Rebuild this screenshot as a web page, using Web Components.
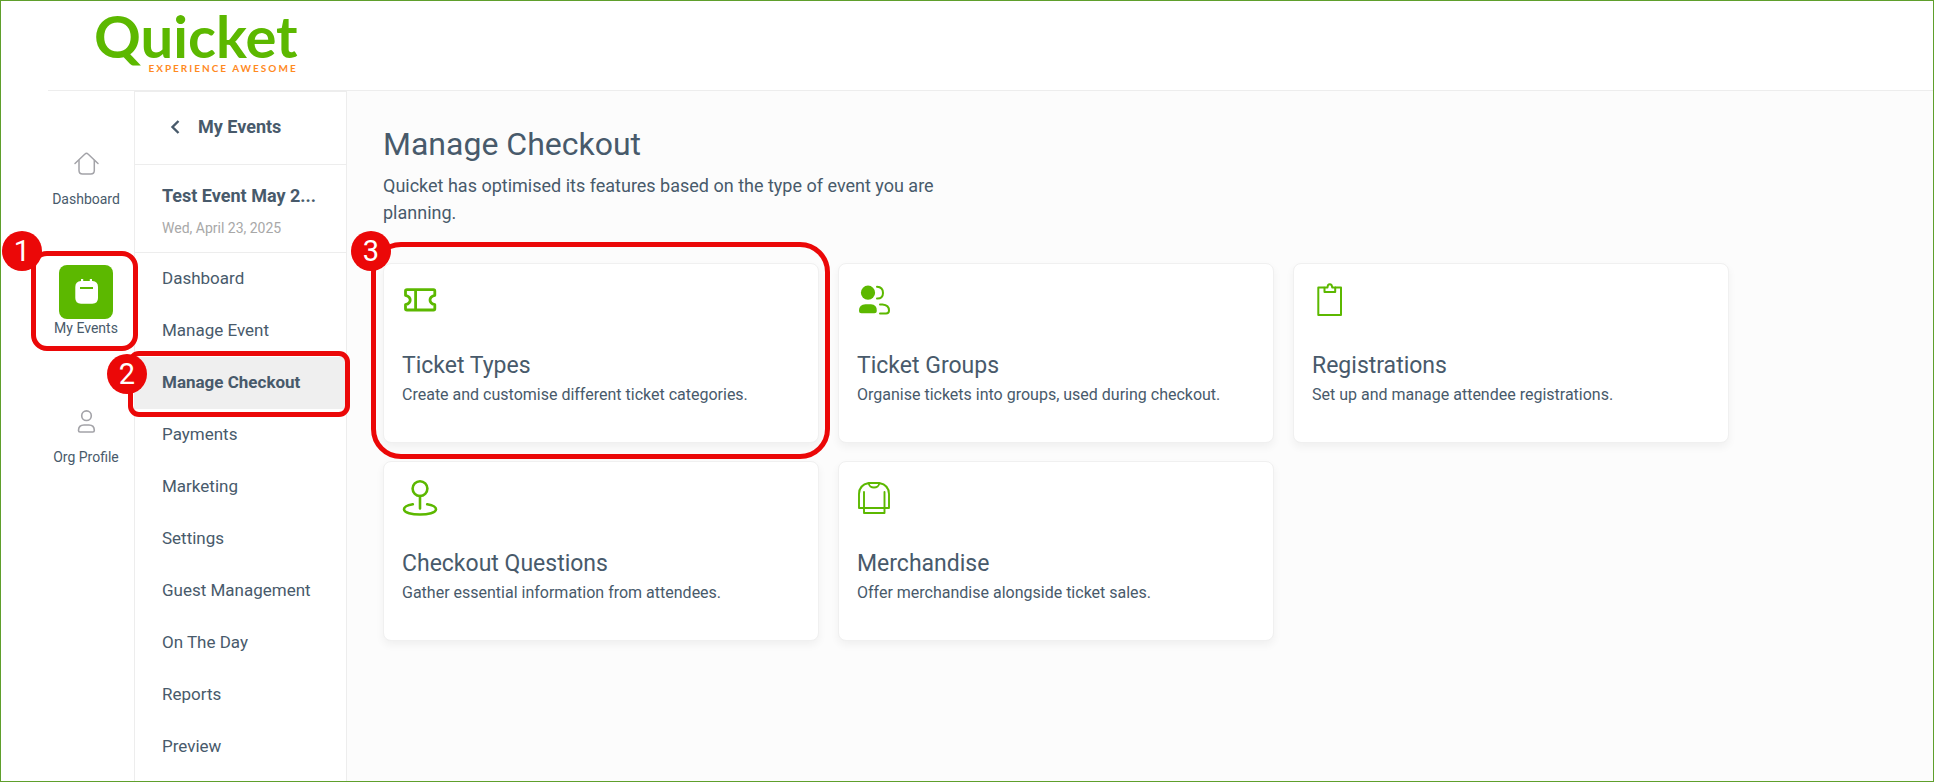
<!DOCTYPE html>
<html lang="en">
<head>
<meta charset="utf-8">
<title>Quicket - Manage Checkout</title>
<style>
  html, body { margin: 0; }
  body {
    --ink: #485a6b;
    --green: #5cb800;
    --line: #ededed;
    --mark: #eb0808;
    font-family: Roboto, "Liberation Sans", sans-serif;
    color: var(--ink);
    background: #fff;
  }
</style>
</head>
<body>
<app-shell>
  <brand-logo slot="header"></brand-logo>
  <side-rail slot="rail">
    <rail-item icon="home">Dashboard</rail-item>
    <rail-item icon="calendar" active>My Events<step-mark slot="mark" step="1"></step-mark></rail-item>
    <rail-item icon="person">Org Profile</rail-item>
  </side-rail>
  <event-menu slot="menu" heading="My Events" event="Test Event May 2..." date="Wed, April 23, 2025">
    <menu-item>Dashboard</menu-item>
    <menu-item>Manage Event</menu-item>
    <menu-item active>Manage Checkout<step-mark slot="mark" step="2"></step-mark></menu-item>
    <menu-item>Payments</menu-item>
    <menu-item>Marketing</menu-item>
    <menu-item>Settings</menu-item>
    <menu-item>Guest Management</menu-item>
    <menu-item>On The Day</menu-item>
    <menu-item>Reports</menu-item>
    <menu-item>Preview</menu-item>
  </event-menu>
  <checkout-page>
    <span slot="title">Manage Checkout</span>
    <span slot="intro">Quicket has optimised its features based on the type of event you are planning.</span>
    <feature-card icon="ticket" heading="Ticket Types">Create and customise different ticket categories.<step-mark slot="mark" step="3"></step-mark></feature-card>
    <feature-card icon="group" heading="Ticket Groups">Organise tickets into groups, used during checkout.</feature-card>
    <feature-card icon="clipboard" heading="Registrations">Set up and manage attendee registrations.</feature-card>
    <feature-card icon="pin" heading="Checkout Questions">Gather essential information from attendees.</feature-card>
    <feature-card icon="jumper" heading="Merchandise">Offer merchandise alongside ticket sales.</feature-card>
  </checkout-page>
</app-shell>

<script>
const railIcons = {
  home: `<g fill="none" stroke="#a3a3a8" stroke-width="1.5" stroke-linecap="round" stroke-linejoin="round">
    <path d="M16 27.5 26 18Q27.5 16.4 29 18L39 27.5"/>
    <path d="M20 24.5V34.5Q20 38 23.5 38H31.8Q35.3 38 35.3 34.5V24.5"/></g>`,
  calendar: `<path fill="#fff" d="M22 14h2.2v2h6.600V14H33v2h.5Q39 16.500 39 22v11q0 5.700-5.700 5.700H22q-5.700 0-5.700-5.700V22Q16.300 16.500 22 16z"/>
    <path d="M21 23H34" stroke="#5cb800" stroke-width="2"/>`,
  person: `<g fill="none" stroke="#a3a3a8" stroke-width="1.600">
    <circle cx="27.500" cy="21.700" r="4.800"/>
    <path d="M25 31h5Q35.300 31 35.300 36.500 35.300 38 33.800 38H21Q19.500 38 19.500 36.500 19.500 31 25 31z"/></g>`
};
const cardIcons = {
  ticket: `<path fill="none" stroke="#5cb800" stroke-width="2.800" stroke-linejoin="round" d="M5 7.600H31.500Q32.800 7.600 32.800 9V13.300Q28 14.500 28 18T32.800 22.700V26.800Q32.800 28 31.500 28H5Q3.500 28 3.500 26.800V22.700Q8.200 21.500 8.200 18T3.500 13.300V9Q3.500 7.600 5 7.600zM13.600 7.600V28"/>`,
  group: `<g fill="#5cb800"><circle cx="11" cy="10.700" r="7.100"/><path d="M8.500 22.300h5.500q5.800 0 5.800 6.500 0 2.500-2.500 2.500H4.500Q2 31.300 2 28.800q0-6.500 6.500-6.500z"/></g>
    <g fill="none" stroke="#5cb800" stroke-width="2" stroke-linecap="round"><path d="M20 4.800Q26 5.200 26 11T20 16.500M23 22.500h2.500Q32 23 32 28.500 32 31.500 29 31.500H23"/></g>`,
  clipboard: `<g fill="none" stroke="#5cb800" stroke-width="2" stroke-linejoin="round"><path d="M12.500 5.500H6.300V33H29V5.500H23"/>
    <path d="M12.500 5.500V10H23.200V5.500H20.200Q20 2.200 17.800 2.200T15.500 5.500z"/></g>`,
  pin: `<g fill="none" stroke="#5cb800" stroke-width="2.600" stroke-linecap="round"><circle cx="18" cy="8.600" r="7.400"/>
    <path d="M18 16V28.500M10.800 24.300Q2 25.800 2 29.300C2 36.300 34 36.300 34 29.300Q34 25.800 25.200 24.300"/></g>`,
  jumper: `<g fill="none" stroke="#5cb800" stroke-width="1.900" stroke-linecap="round" stroke-linejoin="round">
    <path d="M11.700 3H22.300Q32 5 32 14V28H2V14Q2 5 11.700 3C12 9 22 9 22.300 3"/><path d="M7 12V33H27.500V12"/></g>`
};
const svg = (size, body) => `<svg width="${size}" height="${size}" viewBox="0 0 ${size} ${size}" aria-hidden="true">${body}</svg>`;

class View extends HTMLElement {
  connectedCallback() {
    if (this.shadowRoot) return;
    this.attachShadow({ mode: 'open' }).innerHTML = this.view();
  }
}

customElements.define('app-shell', class extends View {
  view() { return `<style>
    :host { display: flex; flex-direction: column; box-sizing: border-box; min-height: 100vh; border: 1px solid #5f9f2c; }
    header { box-sizing: border-box; height: 90px; margin-left: 47px; padding: 7px 46px 0; border-bottom: 1px solid var(--line); }
    .body { flex: 1; display: flex; }
    main { flex: 1; min-width: 0; background: #fcfcfc; }
  </style>
  <header><slot name="header"></slot></header>
  <div class="body"><slot name="rail"></slot><slot name="menu"></slot><main><slot></slot></main></div>`; }
});

customElements.define('brand-logo', class extends View {
  view() { return `<style>
    :host { display: block; }
    a { display: inline-flex; flex-direction: column; color: var(--green); text-decoration: none; font-family: Lato, sans-serif; font-weight: 700; }
    .name { font-size: 58px; line-height: 56px; }
    .tag { align-self: flex-end; font-size: 10px; line-height: 8px; letter-spacing: 2px; color: #ff8a1f; }
  </style><a href="#home"><span class="name">Quicket</span><span class="tag">EXPERIENCE AWESOME</span></a>`; }
});

customElements.define('side-rail', class extends View {
  view() { return `<style>
    :host { display: block; box-sizing: border-box; width: 133px; padding: 45px 0 0 37px; }
    nav { display: flex; flex-direction: column; gap: 57px; }
  </style><nav aria-label="Sections"><slot></slot></nav>`; }
});

customElements.define('rail-item', class extends View {
  view() { return `<style>
    :host { display: block; position: relative; --mark-inset: -14px -4px -14px -7px; --mark-radius: 16px; --badge-x: -34px; --badge-y: -25px; }
    a { display: flex; flex-direction: column; align-items: center; color: inherit; text-decoration: none; font-size: 14px; line-height: 18px; }
    .icon { width: 54px; height: 54px; border-radius: 8px; }
    :host([active]) .icon { background: var(--green); }
    svg { display: block; }
  </style><a href="#section"><span class="icon">${svg(54, railIcons[this.getAttribute('icon')])}</span><span><slot></slot></span></a><slot name="mark"></slot>`; }
});

customElements.define('event-menu', class extends View {
  view() { return `<style>
    :host { display: block; box-sizing: border-box; width: 213px; border: 1px solid var(--line); border-bottom: 0; }
    .back { display: flex; align-items: center; gap: 11px; box-sizing: border-box; width: 100%; height: 73px; padding: 0 28px 2px; border: 0; border-bottom: 1px solid var(--line); background: none; font: 700 18px/24px Roboto, sans-serif; color: inherit; }
    .event { padding: 19px 27px 14px; border-bottom: 1px solid var(--line); }
    h2 { margin: 0 0 10px; font-size: 18px; line-height: 24px; font-weight: 700; white-space: nowrap; }
    p { margin: 0; font-size: 14px; line-height: 20px; color: #a8a8a8; }
    nav { display: flex; flex-direction: column; }
  </style>
  <button class="back" type="button">${svg(24, '<path fill="none" stroke="#485a6b" stroke-width="2.400" d="M15.500 6 9.500 12 15.500 18"/>')}<span>${this.getAttribute('heading')}</span></button>
  <div class="event"><h2>${this.getAttribute('event')}</h2><p>${this.getAttribute('date')}</p></div>
  <nav aria-label="Event menu"><slot></slot></nav>`; }
});

customElements.define('menu-item', class extends View {
  view() { return `<style>
    :host { display: block; position: relative; --mark-inset: -6px -4px -8px -7px; --mark-radius: 11px; --badge-x: -26px; --badge-y: -2px; }
    a { display: block; padding: 13px 27px 15px; font-size: 17px; line-height: 24px; color: inherit; text-decoration: none; white-space: nowrap; }
    :host([active]) a { background: #efefef; font-weight: 700; }
  </style><a href="#page"><slot></slot></a><slot name="mark"></slot>`; }
});

customElements.define('checkout-page', class extends View {
  view() { return `<style>
    :host { display: block; padding: 33px 36px; }
    h1 { margin: 0 0 8px; font-size: 32px; line-height: 40px; font-weight: 400; }
    p { margin: 0 0 37px; max-width: 560px; font-size: 18px; line-height: 27px; }
    .cards { display: grid; grid-template-columns: repeat(3, minmax(0, 1fr)); gap: 18px 19px; max-width: 1346px; }
  </style>
  <h1><slot name="title"></slot></h1><p><slot name="intro"></slot></p>
  <div class="cards"><slot></slot></div>`; }
});

customElements.define('feature-card', class extends View {
  view() { return `<style>
    :host { display: block; position: relative; --mark-inset: -21px -11px -16px -12px; --mark-radius: 30px; --badge-x: -25px; --badge-y: -16px; }
    a { display: block; padding: 18px 18px 35px; border: 1px solid #f0f0f0; border-radius: 8px; background: #fff; box-shadow: 0 4px 8px rgba(0, 0, 0, .05); color: inherit; text-decoration: none; }
    svg { display: block; overflow: visible; }
    h2 { margin: 34px 0 3px; font-size: 23px; line-height: 28px; font-weight: 400; }
    p { margin: 0; font-size: 16px; line-height: 24px; }
  </style>
  <a href="#feature">${svg(36, cardIcons[this.getAttribute('icon')])}<h2>${this.getAttribute('heading')}</h2><p><slot></slot></p></a><slot name="mark"></slot>`; }
});

/* Numbered outline laid over its host item; the item supplies inset and badge place. */
customElements.define('step-mark', class extends View {
  view() { return `<style>
    :host { position: absolute; inset: var(--mark-inset); z-index: 2; box-sizing: border-box; border: 5px solid var(--mark); border-radius: var(--mark-radius); pointer-events: none; }
    span { position: absolute; left: var(--badge-x); top: var(--badge-y); width: 40px; height: 40px; border-radius: 50%; background: var(--mark); color: #fff; font: 400 29px/40px Roboto, sans-serif; text-align: center; }
  </style><span>${this.getAttribute('step')}</span>`; }
});
</script>
</body>
</html>
